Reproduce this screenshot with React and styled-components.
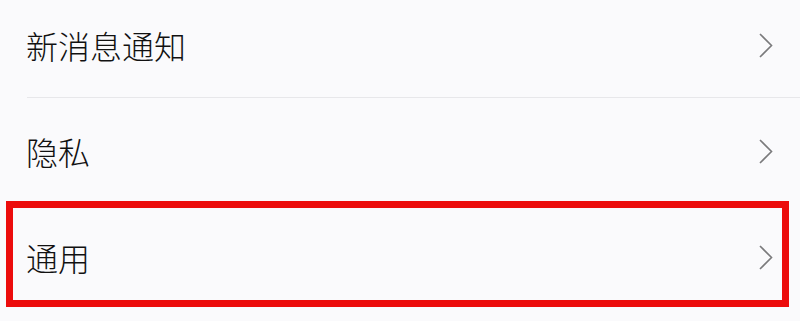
import React from "react";
import styled, { createGlobalStyle } from "styled-components";

const GlobalStyle = createGlobalStyle`
  html, body { margin: 0; padding: 0; background: #fafafc; }
  body { width: 800px; height: 321px; overflow: hidden; }
`;

const List = styled.div`
  display: flex;
  flex-direction: column;
  margin-top: -8px;
  font-family: "Noto Sans CJK SC", "Noto Sans", sans-serif;
`;

const Row = styled.div`
  position: relative;
  display: flex;
  align-items: center;
  justify-content: space-between;
  height: 106px;
  padding: 0 27px 0 26px;
  box-sizing: border-box;
  &::before {
    content: "";
    display: ${(p) => (p.$divider ? "block" : "none")};
    position: absolute;
    left: 27px;
    right: 0;
    bottom: 0;
    height: 1px;
    background: #e7e7ea;
  }
  &::after {
    content: "";
    display: ${(p) => (p.$highlight ? "block" : "none")};
    position: absolute;
    top: -3px;
    left: 6px;
    right: 11px;
    bottom: 3px;
    border: 7px solid #ec0c0c;
    pointer-events: none;
  }
`;

const Label = styled.span`
  font-size: 32px;
  font-weight: 300;
  line-height: 1;
  color: #111;
  letter-spacing: 0;
`;

const Chevron = () => (
  <svg width="14" height="25" viewBox="0 0 14 25" fill="none">
    <polyline points="1,1 12.5,12.5 1,24" stroke="#7a7a7c" strokeWidth="1.6" />
  </svg>
);

const items = [
  { label: "新消息通知", divider: true },
  { label: "隐私" },
  { label: "通用", highlight: true },
];

export default function App() {
  return (
    <>
      <GlobalStyle />
      <List>
        {items.map((it) => (
          <Row key={it.label} $divider={it.divider} $highlight={it.highlight}>
            <Label>{it.label}</Label>
            <Chevron />
          </Row>
        ))}
      </List>
    </>
  );
}
